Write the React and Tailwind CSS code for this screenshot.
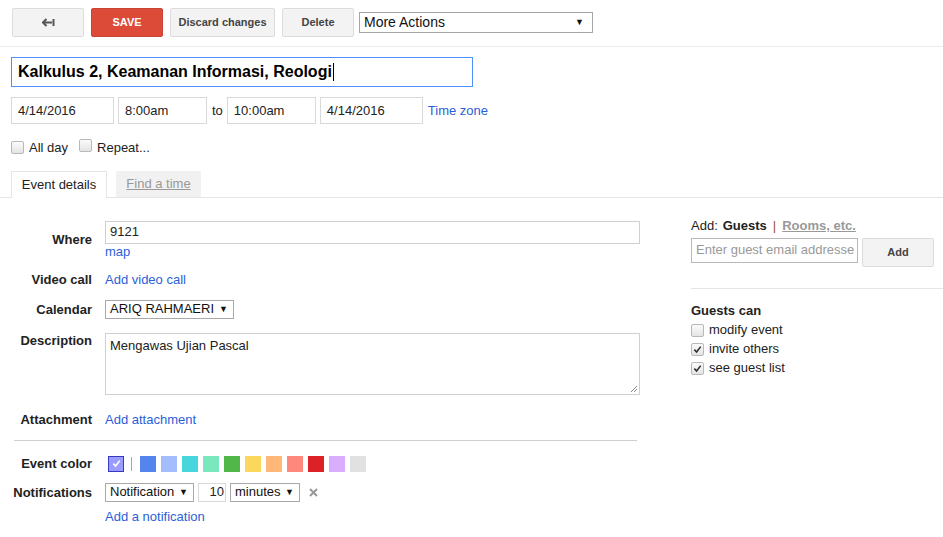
import React from "react";

// swatch colours for the event colour picker
const swatches = [
  "#5484ed",
  "#a4bdfc",
  "#46d6db",
  "#7ae7bf",
  "#51b749",
  "#fbd75b",
  "#ffb878",
  "#ff887c",
  "#dc2127",
  "#dbadff",
  "#e1e1e1",
];

const Check = ({ color = "#333" }) => (
  <svg width="9" height="9" viewBox="0 0 10 10" fill="none">
    <path d="M1.5 5.2 L4 7.8 L8.6 1.8" stroke={color} strokeWidth="1.8" />
  </svg>
);

const Box = ({ checked }) => (
  <span className="inline-flex w-[13px] h-[13px] shrink-0 items-center justify-center rounded-[2px] border border-[#b8b8b8] bg-gradient-to-b from-[#fbfbfb] to-[#e4e4e4]">
    {checked && <Check />}
  </span>
);

const Select = ({ label, className = "" }) => (
  <div
    className={`flex h-[19px] items-center justify-between border border-[#a9a9a9] bg-white pl-[4px] pr-[5px] text-[13px] text-[#111] ${className}`}
  >
    <span>{label}</span>
    <span className="text-[9px] leading-none">▼</span>
  </div>
);

const Link = ({ children, className = "" }) => (
  <span className={`text-[13px] text-[#2b5fd8] ${className}`}>{children}</span>
);

const Button = ({ children, className = "" }) => (
  <div
    className={`flex h-[29px] items-center justify-center rounded-[2px] border border-[#dcdcdc] bg-[#f3f3f3] text-[11px] font-bold text-[#444] ${className}`}
  >
    {children}
  </div>
);

const Row = ({ label, className = "", labelClass = "", children }) => (
  <div className={`flex ${className}`}>
    <div
      className={`w-[92px] shrink-0 pr-0 text-right text-[13px] font-bold leading-[15px] text-[#222] ${labelClass}`}
    >
      {label}
    </div>
    <div className="ml-[13px] flex-1">{children}</div>
  </div>
);

export default function App() {
  return (
    <div className="h-[537px] w-[943px] overflow-hidden bg-white font-['Liberation_Sans',Arial,sans-serif] text-[13px] text-[#222]">
      {/* toolbar */}
      <div className="flex items-center gap-[7px] border-b border-[#ebebeb] pb-[9px] pl-[12px] pt-[8px]">
        <Button className="w-[72px]">
          <svg width="13" height="9" viewBox="0 0 13 9" fill="none">
            <path d="M1 4.5 H10" stroke="#555" strokeWidth="2" />
            <path d="M4.5 1 L1 4.5 L4.5 8" stroke="#555" strokeWidth="2" />
            <path d="M11.5 1 V8" stroke="#555" strokeWidth="2" />
          </svg>
        </Button>
        <div className="flex h-[29px] w-[72px] items-center justify-center rounded-[2px] border border-[#c94434] bg-[#dc4a38] text-[11px] font-bold text-white">
          SAVE
        </div>
        <Button className="w-[105px]">Discard changes</Button>
        <Button className="w-[72px]">Delete</Button>
        <div className="ml-[-2px] flex h-[21px] w-[234px] items-center justify-between border border-[#a6a6a6] pl-[4px] pr-[8px] text-[14px] text-[#111]">
          <span>More Actions</span>
          <span className="text-[9px]">▼</span>
        </div>
      </div>

      {/* title */}
      <div className="pl-[11px] pt-[10px]">
        <div className="flex h-[30px] w-[462px] items-center border border-[#4d90fe] pl-[6px] text-[16px] font-bold text-black">
          <span>Kalkulus 2, Keamanan Informasi, Reologi</span>
          <span className="ml-[1px] h-[18px] w-[1px] bg-black" />
        </div>
      </div>

      {/* date / time */}
      <div className="mt-[10px] flex items-center pl-[11px]">
        <div className="flex h-[27px] w-[103px] items-center border border-[#d9d9d9] pl-[6px]">4/14/2016</div>
        <div className="ml-[4px] flex h-[27px] w-[89px] items-center border border-[#d9d9d9] pl-[6px]">8:00am</div>
        <span className="ml-[5px] mr-[4px]">to</span>
        <div className="flex h-[27px] w-[89px] items-center border border-[#d9d9d9] pl-[6px]">10:00am</div>
        <div className="ml-[4px] flex h-[27px] w-[103px] items-center border border-[#d9d9d9] pl-[6px]">4/14/2016</div>
        <Link className="ml-[5px]">Time zone</Link>
      </div>

      {/* all day / repeat */}
      <div className="mt-[14px] flex items-center pl-[11px]">
        <Box />
        <span className="ml-[5px]">All day</span>
        <span className="ml-[11px]">
          <Box />
        </span>
        <span className="ml-[5px]">Repeat...</span>
      </div>

      {/* tabs */}
      <div className="mt-[13px] flex items-end border-b border-[#e5e5e5] pl-[11px]">
        <div className="-mb-[1px] flex h-[27px] w-[96px] items-center justify-center border border-b-0 border-[#e5e5e5] bg-white text-[#222]">
          Event details
        </div>
        <div className="ml-[9px] flex h-[26px] w-[85px] items-center justify-center bg-[#f1f1f1] text-[#999] underline">
          Find a time
        </div>
      </div>

      <div className="flex">
        {/* left form */}
        <div className="w-[640px] shrink-0 pt-[23px]">
          <Row label="Where" labelClass="pt-[11px]">
            <div className="flex h-[23px] w-[535px] items-center border border-[#d0d0d0] pl-[4px]">9121</div>
            <Link className="block leading-[15px] mb-[1px]">map</Link>
          </Row>

          <Row label="Video call" className="mt-[12px]">
            <Link className="block leading-[15px]">Add video call</Link>
          </Row>

          <Row label="Calendar" className="mt-[13px] items-center">
            <Select label="ARIQ RAHMAERI" className="w-[129px]" />
          </Row>

          <Row label="Description" className="mt-[14px]">
            <div className="relative h-[62px] w-[535px] border border-[#d0d0d0] pl-[4px] pt-[4px] leading-[15px]">
              Mengawas Ujian Pascal
              <svg className="absolute bottom-[1px] right-[1px]" width="8" height="8" viewBox="0 0 8 8">
                <path d="M7 1 L1 7 M7 4 L4 7" stroke="#888" strokeWidth="1" />
              </svg>
            </div>
          </Row>

          <Row label="Attachment" className="mt-[17px]">
            <Link className="block leading-[15px]">Add attachment</Link>
          </Row>

          <div className="ml-[14px] mt-[13px] h-[1px] w-[623px] bg-[#cfcfcf]" />

          <Row label="Event color" className="mt-[15px] items-center">
            <div className="flex h-[16px] items-center">
              <span className="ml-[3px] flex h-[16px] w-[16px] items-center justify-center border border-[#3838cc] bg-[#9a9cff]">
                <Check color="#fff" />
              </span>
              <span className="ml-[7px] mr-[8px] h-[14px] w-[1px] bg-[#aaa]" />
              <div className="flex gap-[5px]">
                {swatches.map((c) => (
                  <span key={c} className="h-[16px] w-[16px]" style={{ backgroundColor: c }} />
                ))}
              </div>
            </div>
          </Row>

          <Row label="Notifications" className="mt-[11px] items-center">
            <div className="flex items-center">
              <Select label="Notification" className="w-[89px]" />
              <div className="ml-[4px] flex h-[19px] w-[28px] items-center justify-end border border-[#d9d9d9] pr-[1px]">10</div>
              <Select label="minutes" className="ml-[4px] w-[70px]" />
              <svg className="ml-[9px]" width="9" height="9" viewBox="0 0 9 9">
                <path d="M1 1 L8 8 M8 1 L1 8" stroke="#999" strokeWidth="2" />
              </svg>
            </div>
          </Row>

          <Row label="" className="mt-[7px]">
            <Link className="block leading-[15px]">Add a notification</Link>
          </Row>
        </div>

        {/* right guests panel */}
        <div className="ml-[51px] flex-1 pt-[20px]">
          <div className="flex items-center leading-[15px]">
            <span>Add:</span>
            <span className="ml-[5px] font-bold">Guests</span>
            <span className="mx-[6px] text-[#a0522d]">|</span>
            <span className="font-bold text-[#999] underline">Rooms, etc.</span>
          </div>
          <div className="mt-[5px] flex items-start">
            <div className="flex h-[25px] w-[167px] items-center overflow-hidden whitespace-nowrap border border-[#b9b9b9] pl-[4px] text-[#999]">
              Enter guest email addresse
            </div>
            <Button className="ml-[4px] w-[72px]">Add</Button>
          </div>
          <div className="mt-[21px] h-[1px] bg-[#e5e5e5]" />
          <div className="mt-[14px] font-bold leading-[15px]">Guests can</div>
          <div className="mt-[5px] flex flex-col gap-[4px]">
            {[
              ["modify event", false],
              ["invite others", true],
              ["see guest list", true],
            ].map(([t, c]) => (
              <div key={t} className="flex h-[15px] items-center">
                <Box checked={c} />
                <span className="ml-[5px]">{t}</span>
              </div>
            ))}
          </div>
        </div>
      </div>
    </div>
  );
}
